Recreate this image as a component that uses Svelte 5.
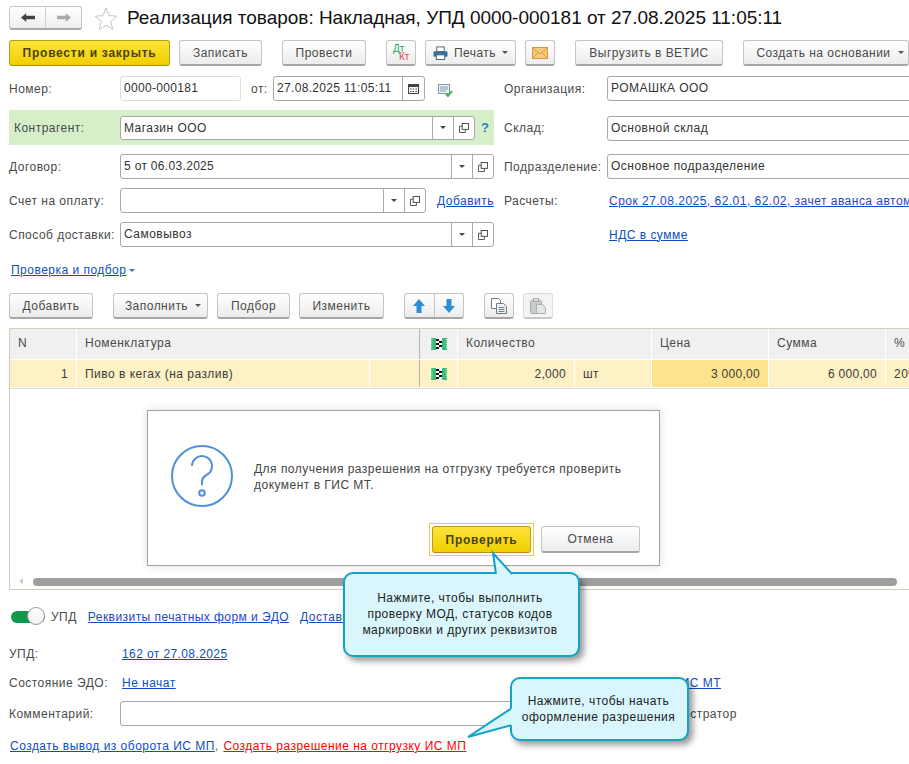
<script>
  const markSvg = 1;
</script>

{#snippet mark()}
  <svg class="mark" viewBox="0 0 16 12" width="16" height="12">
    <rect x="0" y="0" width="16" height="12" fill="#3dbb78"/>
    <path d="M0 1.500h16M0 3.500h16M0 5.500h16M0 7.500h16M0 9.500h16" stroke="#b5ecce" stroke-width=".8" stroke-dasharray="1.500 13 1.500 0"/>
    <rect x="5" y="0" width="6" height="12" fill="#fff"/>
    <path d="M5 1h3v2H5zM8 3h3v2H8zM5 5h3v2H5zM8 7h3v2H8zM5 9h3v2H5z" fill="#111"/>
  </svg>
{/snippet}

{#snippet open()}
  <span class="cell open">
    <svg viewBox="0 0 11 11" width="10" height="10" fill="#fff" stroke="#444">
      <rect x="3.500" y="0.500" width="7" height="6.500"/>
      <path d="M3.500 3.500h-3v7h6.500v-3.500" fill="none"/>
    </svg>
  </span>
{/snippet}

{#snippet drop()}
  <span class="cell drop"><i class="caret dark"></i></span>
{/snippet}

<div class="page">
  <header class="head">
    <div class="nav">
      <span class="navb">
        <svg viewBox="0 0 16 12" width="14" height="11"><path d="M0 6l6-5v3h10v4H6v3z" fill="#444"/></svg>
      </span>
      <span class="navb">
        <svg viewBox="0 0 16 12" width="14" height="11"><path d="M16 6l-6-5v3H0v4h10v3z" fill="#a9a9a9"/></svg>
      </span>
    </div>
    <svg class="star" viewBox="0 0 24 23" width="24" height="23">
      <path d="M12 1l3 7.600 8 .6-6.200 5.200 2 8-6.800-4.300-6.800 4.300 2-8L1 9.200l8-.6z" fill="#fff" stroke="#c4c4c4"/>
    </svg>
    <h1>Реализация товаров: Накладная, УПД 0000-000181 от 27.08.2025 11:05:11</h1>
  </header>

  <div class="bar top">
    <button class="btn yellow b1">Провести и закрыть</button>
    <button class="btn b2">Записать</button>
    <button class="btn b3">Провести</button>
    <button class="btn b4">
      <svg viewBox="0 0 20 18" width="20" height="18">
        <text x="2" y="8" class="dt">Дт</text>
        <text x="8" y="16" class="kt">Кт</text>
      </svg>
    </button>
    <button class="btn b5">
      <svg viewBox="0 0 16 15" width="15" height="14">
        <rect x="4" y="1" width="8" height="5" fill="#fff" stroke="#50606e"/>
        <rect x="0.500" y="5.500" width="15" height="6" rx="1" fill="#38709c"/>
        <rect x="3.500" y="9.500" width="9" height="5" fill="#fff" stroke="#50606e"/>
      </svg>
      <span>Печать</span><i class="caret"></i>
    </button>
    <button class="btn b6">
      <svg viewBox="0 0 16 12" width="16" height="12">
        <rect x="0.500" y="0.500" width="15" height="11" fill="#f7c97c" stroke="#d79a3a"/>
        <path d="M.5.5L8 7l7.500-6.500M.5 11.500L6 5.500M15.500 11.500L10 5.500" fill="none" stroke="#d79a3a"/>
      </svg>
    </button>
    <button class="btn b7">Выгрузить в ВЕТИС</button>
    <button class="btn b8"><span>Создать на основании</span><i class="caret"></i></button>
  </div>

  <section class="form">
    <div class="left">
      <div class="row r1">
        <label class="lab" for="n">Номер:</label>
        <div class="input ro w-num dig" id="n">0000-000181</div>
        <span class="from">от:</span>
        <div class="input w-date dig">
          <span class="val">27.08.2025 11:05:11</span>
          <span class="cell cal">
            <svg viewBox="0 0 11 11" width="11" height="11">
              <rect x="0.500" y="1.500" width="10" height="9" fill="#fff" stroke="#444"/>
              <rect x="0" y="1" width="11" height="3" fill="#444"/>
              <path d="M2 6h1.500M4.750 6h1.500M7.500 6H9M2 8.500h1.500M4.750 8.500h1.500M7.500 8.500H9" stroke="#444"/>
            </svg>
          </span>
        </div>
        <svg class="docok" viewBox="0 0 15 13" width="15" height="13">
          <rect x="0.500" y="0.500" width="11" height="9" fill="#eef3f5" stroke="#7c99a8"/>
          <path d="M2 3h8M2 5h8M2 7h6" stroke="#7c99a8"/>
          <path d="M8 10l2 2 4-5" fill="none" stroke="#2fae4e" stroke-width="1.800"/>
        </svg>
      </div>

      <div class="row band">
        <span class="lab">Контрагент:</span>
        <div class="input w-kontr"><span class="val">Магазин ООО</span>{@render drop()}{@render open()}</div>
        <b class="help">?</b>
      </div>

      <div class="row r3">
        <span class="lab">Договор:</span>
        <div class="input w-full dig"><span class="val">5 от 06.03.2025</span>{@render drop()}{@render open()}</div>
      </div>

      <div class="row r4">
        <span class="lab">Счет на оплату:</span>
        <div class="input w-schet"><span class="val"></span>{@render drop()}{@render open()}</div>
        <a class="link add" href="#a">Добавить</a>
      </div>

      <div class="row r4">
        <span class="lab">Способ доставки:</span>
        <div class="input w-full"><span class="val">Самовывоз</span>{@render drop()}{@render open()}</div>
      </div>
    </div>

    <div class="right">
      <div class="row r1">
        <span class="lab2">Организация:</span>
        <div class="input w-right"><span class="val">РОМАШКА ООО</span></div>
      </div>
      <div class="row rsk">
        <span class="lab2">Склад:</span>
        <div class="input w-right"><span class="val">Основной склад</span></div>
      </div>
      <div class="row r3">
        <span class="lab2">Подразделение:</span>
        <div class="input w-right"><span class="val">Основное подразделение</span></div>
      </div>
      <div class="row r4">
        <span class="lab2">Расчеты:</span>
        <a class="link rl" href="#a">Срок 27.08.2025, 62.01, 62.02, зачет аванса автоматически</a>
      </div>
      <div class="row r4">
        <span class="lab2"></span>
        <a class="link rl" href="#a">НДС в сумме</a>
      </div>
    </div>
  </section>

  <div class="check"><a class="link" href="#a">Проверка и подбор</a><i class="caret blue"></i></div>

  <div class="bar tools">
    <button class="btn t1">Добавить</button>
    <button class="btn t2"><span>Заполнить</span><i class="caret"></i></button>
    <button class="btn t3">Подбор</button>
    <button class="btn t4">Изменить</button>
    <div class="btn arrows">
      <span>
        <svg viewBox="0 0 12 14" width="12" height="14"><path d="M6 0l6 7H8.500v7h-5V7H0z" fill="#2a8fd8"/></svg>
      </span>
      <span>
        <svg viewBox="0 0 12 14" width="12" height="14"><path d="M6 14l6-7H8.500V0h-5v7H0z" fill="#2a8fd8"/></svg>
      </span>
    </div>
    <button class="btn t5">
      <svg viewBox="0 0 16 16" width="16" height="16" fill="#fff" stroke="#6f7f88">
        <path d="M.5.5h7l2 2v8h-9z"/><path d="M5.500 5.500h7l3 3v7h-10z" fill="#eef1f2"/>
        <path d="M7.500 9.500h6M7.500 11.500h6M7.500 13.500h6"/>
      </svg>
    </button>
    <button class="btn t6 off">
      <svg viewBox="0 0 16 16" width="16" height="16" fill="#c9cccd" stroke="#a9aeb0">
        <rect x="0.500" y="2.500" width="11" height="13" rx="1"/><rect x="3.500" y="0.500" width="5" height="3" fill="#dcdcdc"/>
        <path d="M6.500 6.500h6l3 3v6h-9z" fill="#e3e5e6"/>
      </svg>
    </button>
  </div>

  <section class="table">
    <div class="thead">
      <div class="th">N</div>
      <div class="th name">Номенклатура</div>
      <div class="th ic">{@render mark()}</div>
      <div class="th">Количество</div>
      <div class="th">Цена</div>
      <div class="th">Сумма</div>
      <div class="th">%</div>
    </div>
    <div class="trow">
      <div class="td num">1</div>
      <div class="td">Пиво в кегах (на разлив)</div>
      <div class="td"></div>
      <div class="td ic">{@render mark()}</div>
      <div class="td num">2,000</div>
      <div class="td">шт</div>
      <div class="td num cur">3 000,00</div>
      <div class="td num">6 000,00</div>
      <div class="td">20%</div>
    </div>
    <div class="empty"></div>
    <div class="scroll">
      <i class="arrowl"></i>
      <div class="thumb"></div>
    </div>
  </section>

  <div class="toggle-row">
    <span class="toggle"><i></i></span>
    <span class="txt">УПД</span>
    <a class="link l1" href="#a">Реквизиты печатных форм и ЭДО</a>
    <a class="link" href="#a">Доставка</a>
  </div>

  <div class="info i1">
    <span class="lab">УПД:</span>
    <a class="link" href="#a">162 от 27.08.2025</a>
  </div>
  <div class="info i2">
    <span class="lab">Состояние ЭДО:</span>
    <a class="link" href="#a">Не начат</a>
    <a class="link gis" href="#a">Разрешения на отгрузку ИС МТ</a>
  </div>
  <div class="info i3">
    <span class="lab">Комментарий:</span>
    <div class="input w-comm"></div>
    <span class="txt admin">Администратор</span>
  </div>
  <div class="foot">
    <a class="link" href="#a">Создать вывод из оборота ИС МП</a><span class="comma">,</span>
    <a class="link red" href="#a">Создать разрешение на отгрузку ИС МП</a>
  </div>

  <div class="dialog">
    <div class="msg">
      <svg viewBox="0 0 62 62" width="62" height="62" fill="none" stroke="#4f90d8" stroke-width="2">
        <circle cx="31" cy="31" r="30"/>
        <path d="M21 21a10 10 0 1 1 15 8.700c-3 2-5 3-5 7v3.500"/>
        <circle cx="31" cy="48" r="2.800"/>
      </svg>
      <p>Для получения разрешения на отгрузку требуется проверить<br/>документ в ГИС МТ.</p>
    </div>
    <div class="dbtns">
      <span class="focus"><button class="btn yellow d1">Проверить</button></span>
      <button class="btn d2">Отмена</button>
    </div>
  </div>

  <div class="callout c1">
    <svg class="tail t-a" viewBox="0 0 24 24" width="24" height="24">
      <path d="M1 0L4 21H20z" fill="#d9f6fd"/>
      <path d="M4 21L1 0L20 21" fill="none"/>
    </svg>
    Нажмите, чтобы выполнить<br/>проверку МОД, статусов кодов<br/>маркировки и других реквизитов
  </div>
  <div class="callout c2">
    <svg class="tail t-b" viewBox="0 0 46 34" width="46" height="34">
      <path d="M0 30L44 1V18z" fill="#d9f6fd"/>
      <path d="M43 1.600L0 30L43 18.200" fill="none"/>
    </svg>
    Нажмите, чтобы начать<br/>оформление разрешения
  </div>
</div>

<style>
  :global(body) { margin: 0; background: #fff; }
  .page {
    position: relative; width: 909px; height: 764px; overflow: hidden; background: #fff;
    font: 12px/16px "Liberation Sans", Arial, sans-serif; letter-spacing: .48px; color: #4a4a4a;
  }
  .head { display: flex; align-items: center; height: 24px; padding: 6px 0 0 9px; }
  .nav {
    display: flex; width: 73px; height: 24px; box-sizing: border-box; border: 1px solid #c6c6c6;
    border-bottom: 2px solid #a8a8a8; border-radius: 3px; background: linear-gradient(#fff, #eee);
  }
  .navb { flex: 1; display: flex; align-items: center; justify-content: center; }
  .navb + .navb { border-left: 1px solid #d0d0d0; }
  .star { margin-left: 12px; }
  h1 { margin: 0 0 0 9px; font-size: 19px; font-weight: 400; color: #111; letter-spacing: -.02px; white-space: nowrap; line-height: 24px; }

  .bar { display: flex; }
  .top { margin: 10px 0 0 9px; }
  .btn {
    box-sizing: border-box; height: 26px; padding: 0; display: inline-flex; align-items: center; justify-content: center;
    border: 1px solid #c4c4c4; border-bottom: 2px solid #a6a6a6; border-radius: 3px;
    background: linear-gradient(#fff, #ececec); font: inherit; letter-spacing: inherit; color: #4a4a4a; flex: none;
  }
  .yellow {
    background: linear-gradient(#fde33a, #f0cf00); border: 1px solid #b79f1e; border-bottom-color: #a8901a;
    font-weight: 700; color: #4a4211; letter-spacing: .75px;
  }
  .b1 { width: 161px; }
  .b2 { width: 83px; margin-left: 9px; }
  .b3 { width: 84px; margin-left: 20px; }
  .b4 { width: 30px; margin-left: 20px; }
  .b5 { width: 91px; margin-left: 9px; gap: 6px; }
  .b6 { width: 30px; margin-left: 9px; }
  .b7 { width: 148px; margin-left: 20px; }
  .b8 { width: 166px; margin-left: 20px; gap: 7px; padding-left: 8px; }
  .dt, .kt { font: 400 10px "Liberation Sans", sans-serif; letter-spacing: 0; }
  .dt { fill: #22a55a; } .kt { fill: #e2474a; }
  .caret { display: inline-block; width: 0; height: 0; border: 3px solid transparent; border-top: 3px solid #555; border-bottom: 0; }
  .caret.dark { border-top-color: #444; }
  .caret.blue { border-top-color: #4a6fb0; margin-left: 3px; vertical-align: middle; }

  .form { display: flex; margin: 10px 0 0 9px; align-items: flex-start; }
  .left { width: 485px; flex: none; }
  .right { margin-left: 10px; flex: 1; min-width: 0; }
  .row { display: flex; align-items: center; }
  .r1 { height: 25px; }
  .band { height: 35px; margin-top: 9px; background: #d6efc9; }
  .band .lab { padding-left: 5px; width: 106px; }
  .rsk { height: 24px; margin-top: 15px; }
  .r3 { height: 25px; margin-top: 9px; }
  .right .r3 { margin-top: 14px; }
  .r4 { height: 25px; margin-top: 9px; }
  .lab { width: 111px; flex: none; white-space: nowrap; }
  .lab2 { width: 103px; flex: none; white-space: nowrap; }
  .input {
    box-sizing: border-box; height: 25px; flex: none; display: flex; align-items: stretch;
    border: 1px solid #a8a8a8; border-radius: 3px; background: #fff; color: #333; line-height: 23px;
    white-space: nowrap; overflow: hidden;
  }
  .dig { letter-spacing: .32px; }
  .val { flex: 1; padding-left: 3px; min-width: 0; }
  .ro { border-color: #dedede; padding-left: 3px; }
  .w-num { width: 121px; }
  .from { margin-left: 10px; width: 21px; flex: none; }
  .w-date { width: 152px; margin-left: 1px; }
  .docok { margin: 4px 0 0 13px; }
  .w-kontr { width: 355px; height: 24px; }
  .help { margin-left: 6px; color: #1a86c8; font-size: 13px; }
  .w-full { width: 374px; }
  .w-schet { width: 306px; }
  .add { margin-left: 11px; }
  .w-right { width: 400px; }
  .cell { flex: none; display: flex; align-items: center; justify-content: center; border-left: 1px solid #a8a8a8; }
  .drop { width: 20px; }
  .open { width: 20px; }
  .cal { width: 21px; }
  .link { color: #0b4fc0; text-decoration: underline; white-space: nowrap; }
  .rl { margin-left: 2px; }

  .check { margin: 15px 0 0 11px; height: 16px; }
  .tools { margin: 15px 0 0 9px; }
  .t1 { width: 84px; }
  .t2 { width: 95px; margin-left: 20px; gap: 7px; padding-left: 5px; }
  .t3 { width: 73px; margin-left: 9px; }
  .t4 { width: 85px; margin-left: 9px; }
  .arrows { width: 60px; margin-left: 20px; }
  .arrows span { flex: 1; display: flex; align-items: center; justify-content: center; height: 100%; }
  .arrows span + span { border-left: 1px solid #c4c4c4; }
  .t5 { width: 30px; margin-left: 20px; }
  .t6 { width: 30px; margin-left: 9px; }
  .off { border-color: #dcdcdc; border-bottom-color: #c8c8c8; background: #f4f4f4; }

  .table {
    margin: 9px 0 0 9px; height: 262px; box-sizing: border-box; display: flex; flex-direction: column;
    border: 1px solid #d3ccb8; border-right: 0;
  }
  .thead { display: grid; grid-template-columns: 66px 342px 37px 193px 116px 116px 1fr; gap: 1px; height: 30px; flex: none; }
  .th { background: #f0f0f0; padding: 6px 0 0 8px; box-shadow: 1px 0 0 #fff; }
  .th.name { padding-left: 8px; }
  .ic { display: flex; align-items: center; justify-content: center; border-left: 1px solid #b4b4b4; margin-left: -1px; padding: 0 !important; }
  .th.ic { padding-right: 1px; }
  .trow {
    display: grid; grid-template-columns: 66px 292px 49px 37px 116px 76px 116px 116px 1fr; gap: 1px;
    height: 27px; flex: none; margin-top: 1px; padding-bottom: 1px; border-bottom: 1px solid #dcdcdc;
  }
  .td { background: #fdf1c5; color: #3c3c3c; padding: 6px 8px 0; white-space: nowrap; }
  .td.ic { padding: 0; }
  .num { text-align: right; letter-spacing: .3px; }
  .td:nth-child(1) { padding-right: 8px; }
  .cur { background: #fde38d; }
  .empty { flex: 1; }
  .scroll { height: 9px; margin-bottom: 3px; position: relative; display: flex; align-items: center; padding-left: 23px; }
  .arrowl { position: absolute; left: 9px; top: 1px; border: 3.500px solid transparent; border-right: 4px solid #c8c8c8; border-left: 0; }
  .thumb { width: 864px; height: 8px; border-radius: 4px; background: #9e9e9e; }

  .toggle-row { display: flex; align-items: center; margin: 17px 0 0 11px; height: 20px; }
  .toggle { width: 34px; height: 12px; position: relative; background: #0b9a4c; border-radius: 6px; flex: none; }
  .toggle i {
    position: absolute; right: 0; top: -4px; width: 18px; height: 18px; box-sizing: border-box;
    border: 1px solid #9a9a9a; border-radius: 50%; background: linear-gradient(#fff, #f0f0f0);
  }
  .txt { margin-left: 6px; }
  .l1 { margin: 0 11px; letter-spacing: .45px; }
  .info { display: flex; align-items: center; margin-left: 9px; position: relative; }
  .i1 { height: 16px; margin-top: 19px; }
  .i1 .link { margin-left: 2px; letter-spacing: .4px; }
  .i2 { height: 16px; margin-top: 13px; }
  .i2 .link { margin-left: 2px; }
  .i2 .gis { position: absolute; right: 188px; }
  .i3 { height: 25px; margin-top: 10px; }
  .w-comm { width: 500px; }
  .admin { margin-left: 0; position: absolute; left: 635px; }
  .foot { margin: 12px 0 0 10px; white-space: nowrap; }
  .comma { color: #666; }
  .red { color: #f00; margin-left: 1px; }

  .dialog {
    position: absolute; left: 147px; top: 410px; width: 513px; height: 156px; box-sizing: border-box;
    border: 1px solid #a3a3a3; background: #fff; box-shadow: 0 0 8px rgba(0,0,0,.15);
  }
  .msg { display: flex; align-items: center; margin: 34px 0 0 23px; height: 62px; }
  .msg p { margin: 0 0 0 21px; color: #444; line-height: 16px; padding-top: 1px; }
  .dbtns { display: flex; position: absolute; left: 281px; top: 112px; }
  .focus { box-sizing: border-box; width: 105px; height: 33px; border: 1px solid #f2c94c; padding: 2px; display: block; }
  .d1 { width: 99px; height: 27px; }
  .d2 { width: 99px; height: 27px; margin: 3px 0 0 7px; }

  .callout {
    position: absolute; box-sizing: border-box; border: 2px solid #12a3c6; border-radius: 10px; background: #d9f6fd;
    box-shadow: 4px 4px 6px rgba(0,0,0,.4); color: #222; text-align: center; white-space: nowrap;
  }
  .c1 { left: 343px; top: 572px; width: 237px; height: 85px; padding: 16px 3px 0 0; }
  .c2 { left: 510px; top: 677px; width: 179px; height: 64px; padding: 14px 2px 0 0; }
  .tail { position: absolute; overflow: visible; }
  .tail path { stroke: #12a3c6; stroke-width: 2; }
  .tail path:first-child { stroke: none; }
  .t-a { left: 147px; top: -21px; }
  .t-b { left: -44px; top: 28px; }
</style>
